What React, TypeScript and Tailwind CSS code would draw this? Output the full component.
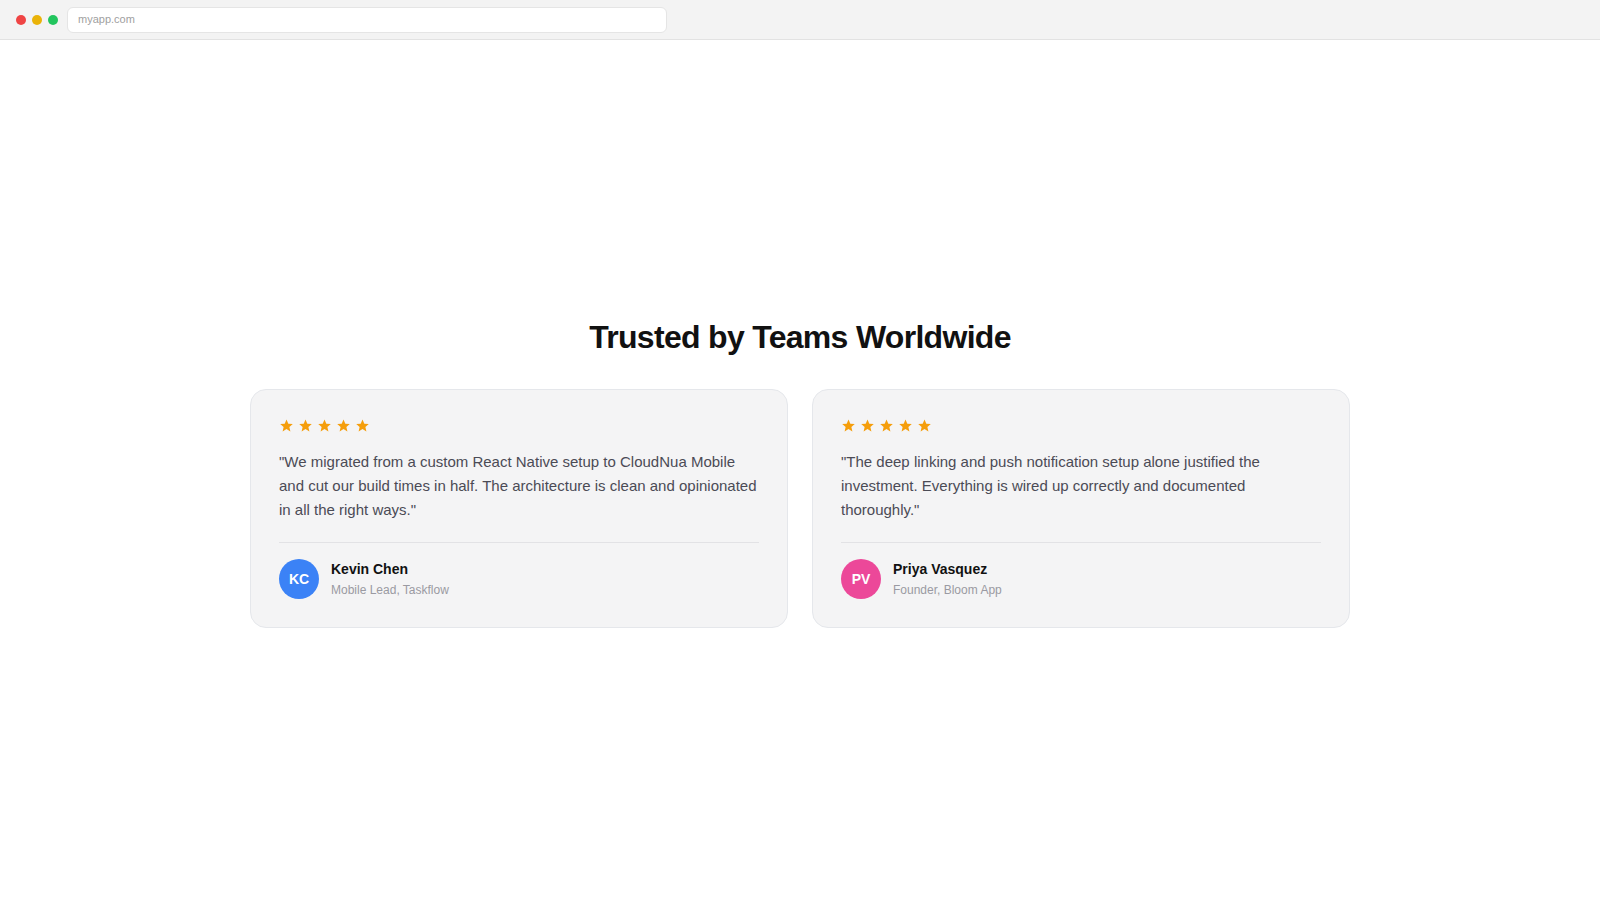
import React from "react";

const Star = () => (
  <svg width="15" height="15" viewBox="0 0 24 24" className="fill-[#f59e0b]">
    <path d="M12 2.5l2.9 6.6 7.1.6-5.4 4.7 1.6 7-6.2-3.8-6.2 3.8 1.6-7L2 9.7l7.1-.6z" />
  </svg>
);

type T = { quote: string; initials: string; name: string; role: string; color: string };

const items: T[] = [
  {
    quote:
      '"We migrated from a custom React Native setup to CloudNua Mobile and cut our build times in half. The architecture is clean and opinionated in all the right ways."',
    initials: "KC",
    name: "Kevin Chen",
    role: "Mobile Lead, Taskflow",
    color: "bg-[#3b82f6]",
  },
  {
    quote:
      '"The deep linking and push notification setup alone justified the investment. Everything is wired up correctly and documented thoroughly."',
    initials: "PV",
    name: "Priya Vasquez",
    role: "Founder, Bloom App",
    color: "bg-[#ec4899]",
  },
];

function Card({ t }: { t: T }) {
  return (
    <div className="rounded-2xl border border-[#e5e7eb] bg-[#f4f4f5] px-7 pt-7 pb-[27px]">
      <div className="flex gap-[4px] h-4 items-center">
        {[0, 1, 2, 3, 4].map((i) => (
          <Star key={i} />
        ))}
      </div>
      <p className="mt-4 text-[15px] leading-6 text-[#4b4b55]">{t.quote}</p>
      <div className="mt-5 border-t border-[#e2e2e5] pt-4 flex items-center gap-3">
        <div
          className={`${t.color} w-10 h-10 rounded-full flex items-center justify-center text-white text-[14px] font-bold`}
        >
          {t.initials}
        </div>
        <div className="flex flex-col">
          <span className="text-[14px] font-bold text-[#111] leading-5">{t.name}</span>
          <span className="text-[12px] text-[#9a9aa2] leading-5 mt-[1px]">{t.role}</span>
        </div>
      </div>
    </div>
  );
}

export default function App() {
  return (
    <div className="min-h-screen h-[900px] flex flex-col bg-white font-['Liberation_Sans',Arial,sans-serif]">
      <div className="h-10 shrink-0 bg-[#f3f3f3] border-b border-[#e2e2e2] flex items-center px-4">
        <div className="flex gap-[6px]">
          <span className="w-[10px] h-[10px] rounded-full bg-[#ef4444]" />
          <span className="w-[10px] h-[10px] rounded-full bg-[#eab308]" />
          <span className="w-[10px] h-[10px] rounded-full bg-[#22c55e]" />
        </div>
        <div className="ml-[9px] w-[600px] h-[26px] bg-white rounded-md border border-[#e5e5e5] flex items-center px-[10px] text-[11px] text-[#a0a0a0]">
          myapp.com
        </div>
      </div>
      <div className="flex-1 flex items-center justify-center pt-1">
        <div className="w-[1100px]">
          <h2 className="text-center text-[32px] leading-10 font-bold tracking-[-0.7px] text-[#111]">
            Trusted by Teams Worldwide
          </h2>
          <div className="mt-8 grid grid-cols-2 gap-6">
            {items.map((t) => (
              <Card key={t.name} t={t} />
            ))}
          </div>
        </div>
      </div>
    </div>
  );
}
